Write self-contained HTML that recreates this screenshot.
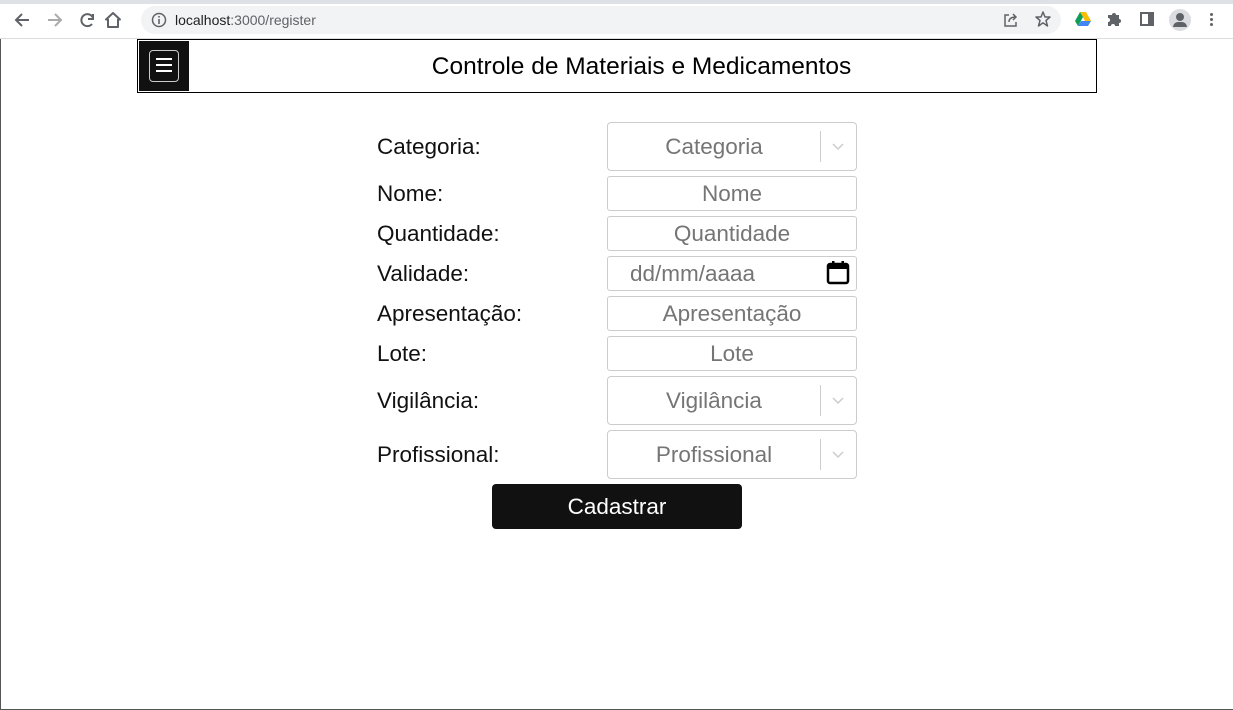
<!DOCTYPE html>
<html><head><meta charset="utf-8"><style>
*{box-sizing:border-box;margin:0;padding:0}
body{width:1233px;height:710px;background:#fff;font-family:"Liberation Sans",sans-serif;position:relative;overflow:hidden}
.a{position:absolute}
.tb{left:0;top:0;width:1233px;height:39px;background:#fff;border-bottom:1px solid #dadce0}
.strip{left:0;top:0;width:1233px;height:4px;background:#dee1e6}
.url{left:141px;top:6px;width:920px;height:28px;border-radius:14px;background:#f1f3f4}
.lbl{left:377px;font-size:22.5px;color:#111}
.in{left:607px;width:250px;border:1px solid #ccc;border-radius:3px;color:#757575;font-size:22.5px;text-align:center}
.sel{border-radius:4px}
.sel .t{position:absolute;left:0;width:212px;text-align:center}
.sel .sep{position:absolute;left:212px;top:8px;bottom:8px;width:1px;background:#ccc}
.sel svg{position:absolute;left:224px;top:20px}
</style></head><body>
<div class="a tb"></div><div class="a strip"></div>
<div class="a" style="left:0;top:39px;width:1px;height:671px;background:#555"></div>
<div class="a" style="left:0;top:709px;width:1233px;height:1px;background:#555"></div>
<svg class="a" style="left:12px;top:10px" width="110" height="20" viewBox="0 0 110 20" fill="none" stroke-width="2">
<path d="M17 10H4M10 4L4 10L10 16" stroke="#5f6368"/>
<path d="M36 10H49M43 4L49 10L43 16" stroke="#aaa"/>
<path d="M81 8A6 6 0 1 0 80 14M81 4V9H76" stroke="#5f6368"/>
<path d="M101 3L108 9.5H106V17H96V9.5H94Z" stroke="#5f6368" stroke-linejoin="round"/>
</svg>
<div class="a url"></div>
<svg class="a" style="left:151px;top:12px" width="16" height="16"><circle cx="8" cy="8" r="6.5" stroke="#5f6368" stroke-width="1.5" fill="none"/><rect x="7.2" y="7" width="1.6" height="5" fill="#5f6368"/><rect x="7.2" y="4" width="1.6" height="1.6" fill="#5f6368"/></svg>
<div class="a" style="left:175px;top:12px;font-size:14px;color:#202124">localhost<span style="color:#5f6368">:3000/register</span></div>
<svg class="a" style="left:1003px;top:12px" width="16" height="16" fill="none" stroke="#5f6368" stroke-width="1.5"><path d="M6 3H2V14H13V10"/><path d="M6 10C6 6 9 5 13 5M10 2L13 5L10 8"/></svg>
<svg class="a" style="left:1034px;top:10px" width="18" height="18"><path d="M9 2L11 7H16L12 10.5L13.5 16L9 12.8L4.5 16L6 10.5L2 7H7Z" fill="none" stroke="#5f6368" stroke-width="1.5" stroke-linejoin="round"/></svg>
<svg class="a" style="left:1075px;top:12px" width="16" height="14"><path d="M5 0h6l5 9h-6z" fill="#fbbc04"/><path d="M5 0L0 9l3 5 5-9z" fill="#0f9d58"/><path d="M3 14h10l3-5H6z" fill="#4285f4"/></svg>
<svg class="a" style="left:1106px;top:11px" width="16" height="16"><path d="M2 4H6A2 2 0 0 1 10 4H13V8A2 2 0 0 1 13 12V15H9A2 2 0 0 0 5 15H2V11A2 2 0 0 0 2 7Z" fill="#5f6368"/></svg>
<div class="a" style="left:1140px;top:12px;width:14px;height:14px;border:2px solid #5f6368;border-right-width:6px"></div>
<div class="a" style="left:1169px;top:9px;width:22px;height:22px;border-radius:50%;background:#dadce0"><div class="a" style="left:7px;top:4px;width:8px;height:8px;border-radius:50%;background:#5f6368"></div><div class="a" style="left:4px;top:13px;width:14px;height:5px;border-radius:6px 6px 0 0;background:#5f6368"></div></div>
<div class="a" style="left:1210px;top:13px;width:3px;height:3px;border-radius:50%;background:#5f6368;box-shadow:0 5px 0 #5f6368,0 10px 0 #5f6368"></div>

<div class="a" style="left:137px;top:39px;width:960px;height:54px;border:1px solid #000"></div>
<div class="a" style="left:139px;top:41px;width:50px;height:50px;background:#111"></div>
<div class="a" style="left:149px;top:50px;width:30px;height:32px;border:1px solid #ccc;border-radius:4px"></div>
<div class="a" style="left:156px;top:58px;width:16px;height:2px;background:#fff;box-shadow:0 6px 0 #fff,0 12px 0 #fff"></div>
<div class="a" style="left:0;width:1233px;top:53px;text-align:center;font-size:24.5px;color:#000;padding-left:50px">Controle de Materiais e Medicamentos</div>

<div class="a lbl" style="top:134px">Categoria:</div>
<div class="a in sel" style="top:122px;height:49px;line-height:47px"><span class="t">Categoria</span><span class="sep"></span><svg width="12" height="8"><path d="M1 1L6 6L11 1" fill="none" stroke="#ccc" stroke-width="1.5"/></svg></div>
<div class="a lbl" style="top:181px">Nome:</div>
<div class="a in" style="top:176px;height:35px;line-height:33px">Nome</div>
<div class="a lbl" style="top:221px">Quantidade:</div>
<div class="a in" style="top:216px;height:35px;line-height:33px">Quantidade</div>
<div class="a lbl" style="top:261px">Validade:</div>
<div class="a in" style="top:256px;height:35px;line-height:33px;text-align:left;padding-left:22px">dd/mm/aaaa</div>
<svg class="a" style="left:826px;top:260px" width="24" height="26"><rect x="2" y="4" width="20" height="19" rx="2" fill="none" stroke="#000" stroke-width="2.5"/><rect x="2" y="4" width="20" height="5" fill="#000"/><rect x="6" y="1" width="2.5" height="5" fill="#000"/><rect x="15.5" y="1" width="2.5" height="5" fill="#000"/></svg>
<div class="a lbl" style="top:301px">Apresentação:</div>
<div class="a in" style="top:296px;height:35px;line-height:33px">Apresentação</div>
<div class="a lbl" style="top:341px">Lote:</div>
<div class="a in" style="top:336px;height:35px;line-height:33px">Lote</div>
<div class="a lbl" style="top:388px">Vigilância:</div>
<div class="a in sel" style="top:376px;height:49px;line-height:47px"><span class="t">Vigilância</span><span class="sep"></span><svg width="12" height="8"><path d="M1 1L6 6L11 1" fill="none" stroke="#ccc" stroke-width="1.5"/></svg></div>
<div class="a lbl" style="top:442px">Profissional:</div>
<div class="a in sel" style="top:430px;height:49px;line-height:47px"><span class="t">Profissional</span><span class="sep"></span><svg width="12" height="8"><path d="M1 1L6 6L11 1" fill="none" stroke="#ccc" stroke-width="1.5"/></svg></div>
<div class="a" style="left:492px;top:484px;width:250px;height:45px;background:#111;border-radius:4px;color:#fff;font-size:22.5px;text-align:center;line-height:45px">Cadastrar</div>
</body></html>
